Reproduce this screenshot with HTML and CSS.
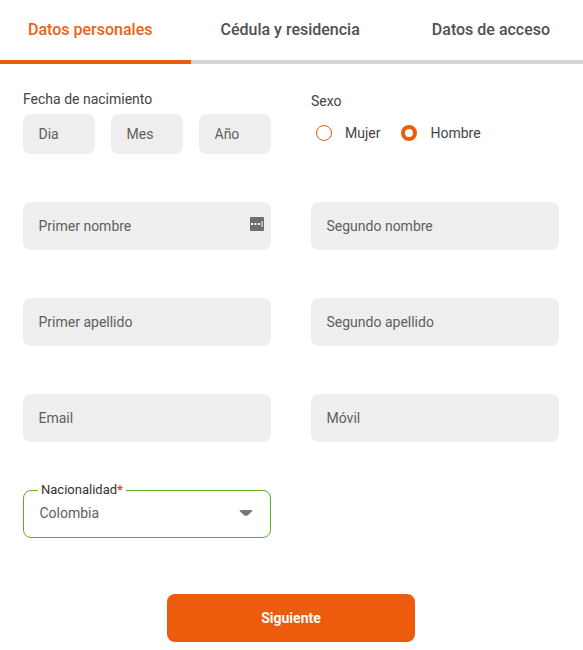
FILE: index.html
```html
<!DOCTYPE html>
<html lang="es">
<head>
<meta charset="UTF-8" />
<meta name="viewport" content="width=device-width, initial-scale=1" />
<title>Registro - Datos personales</title>
<link rel="stylesheet" href="styles.css">
</head>
<body>
  <nav class="tabs">
    <a class="tab tab-active">Datos personales</a>
    <a class="tab">Cédula y residencia</a>
    <a class="tab">Datos de acceso</a>
  </nav>
  <div class="progress"><div class="progress-fill"></div></div>

  <form class="form">
    <div class="group">
      <div class="group-label">Fecha de nacimiento</div>
      <div class="date-row">
        <input class="field" placeholder="Dia" />
        <input class="field" placeholder="Mes" />
        <input class="field" placeholder="Año" />
      </div>
    </div>

    <div class="group group-sex">
      <div class="group-label">Sexo</div>
      <div class="radio-row">
        <label class="radio"><span class="radio-dot"></span>Mujer</label>
        <label class="radio"><span class="radio-dot radio-dot-on"></span>Hombre</label>
      </div>
    </div>

    <div class="field-wrap">
      <input class="field field-tall" placeholder="Primer nombre" />
      <svg class="key-icon" width="14" height="14" viewBox="0 0 14 14">
        <path fill="#6e6e70" d="M1 0h12a1 1 0 0 1 1 1v12a1 1 0 0 1-1 1H1a1 1 0 0 1-1-1V1a1 1 0 0 1 1-1z"/>
        <path fill="#fff" d="M1 6h2v2H1zM4.500 6h2v2h-2zM8 6h2v2H8zM11.500 4h1v6h-1z"/>
      </svg>
    </div>
    <input class="field field-tall" placeholder="Segundo nombre" />
    <input class="field field-tall" placeholder="Primer apellido" />
    <input class="field field-tall" placeholder="Segundo apellido" />
    <input class="field field-tall" placeholder="Email" />
    <input class="field field-tall" placeholder="Móvil" />

    <div class="select-box">
      <span class="select-label">Nacionalidad<span class="required">*</span></span>
      <span class="select-value">Colombia</span>
      <svg class="select-arrow" width="14" height="6" viewBox="0 0 14 6">
        <path fill="#77787b" d="M1.500 0h11q1.500 0 .8 1L9 5.200q-2 1.300-4 0L.7 1Q0 0 1.500 0z"/>
      </svg>
    </div>
  </form>

  <div class="actions">
    <button class="next-btn" type="button">Siguiente</button>
  </div>
</body>
</html>
```

FILE: styles.css
```css
* {
  box-sizing: border-box;
}
body {
  margin: 0;
  background: #fff;
  font-family: Roboto, Arial, sans-serif;
  font-size: 14px;
  color: #444;
}
.tabs {
  display: flex;
  align-items: center;
  height: 60px;
  padding: 0 0 2px 28px;
  font-size: 16px;
  font-weight: 500;
}
.tab {
  color: #505050;
  margin-right: 72px;
  white-space: nowrap;
}
.tab-active {
  color: #ee5f12;
  margin-right: 68px;
}
.progress {
  height: 4px;
  background: #d4d4d4;
}
.progress-fill {
  width: 191px;
  height: 100%;
  background: #ec5c0c;
}
.form {
  display: grid;
  grid-template-columns: 248px 248px;
  column-gap: 40px;
  row-gap: 48px;
  padding: 26px 0 0 23px;
}
.group-label {
  line-height: 18px;
  margin-bottom: 6px;
  color: #444;
}
.group-sex .group-label {
  margin: 2px 0 11px;
}
.date-row {
  display: flex;
  gap: 16px;
}
.date-row .field {
  width: 72px;
}
.field {
  width: 100%;
  height: 40px;
  padding: 0 15.500px;
  border: none;
  border-radius: 8px;
  outline: none;
  font-family: inherit;
  font-size: 14px;
  color: #444;
  background-color: #eeeeee;
  background-image: radial-gradient(circle, #f4f4f4 0.6px, transparent 0.8px);
  background-size: 3px 3px;
}
.field::placeholder {
  color: #606060;
  opacity: 1;
}
.field-tall {
  height: 48px;
}
.field-wrap {
  position: relative;
}
.key-icon {
  position: absolute;
  top: 15px;
  right: 7px;
}
.radio-row {
  display: flex;
  align-items: center;
  padding-left: 5px;
  gap: 21px;
  line-height: 24px;
}
.radio {
  display: flex;
  align-items: center;
  gap: 13px;
  color: #444;
}
.radio-dot {
  width: 16px;
  height: 16px;
  border: 1px solid #ec5c0c;
  border-radius: 50%;
  background: #fff;
}
.radio-dot-on {
  border-width: 4.500px;
}
.select-box {
  position: relative;
  display: flex;
  align-items: center;
  justify-content: space-between;
  height: 48px;
  padding: 0 17px 3px 15.500px;
  border: 1px solid #5fac26;
  border-radius: 8px;
  background: #fff;
}
.select-label {
  position: absolute;
  top: -9px;
  left: 14px;
  padding: 0 3px;
  background: #fff;
  font-size: 13px;
  line-height: 16px;
  color: #333;
}
.required {
  color: #e8421c;
  font-weight: 700;
}
.select-value {
  color: #606060;
}
.actions {
  display: flex;
  justify-content: center;
  margin-top: 56px;
  padding-right: 1px;
}
.next-btn {
  width: 248px;
  height: 48px;
  padding-bottom: 2px;
  border: none;
  border-radius: 8px;
  background: #ec5c0c;
  color: #fff;
  font-family: inherit;
  font-size: 14px;
  font-weight: 700;
}
```
